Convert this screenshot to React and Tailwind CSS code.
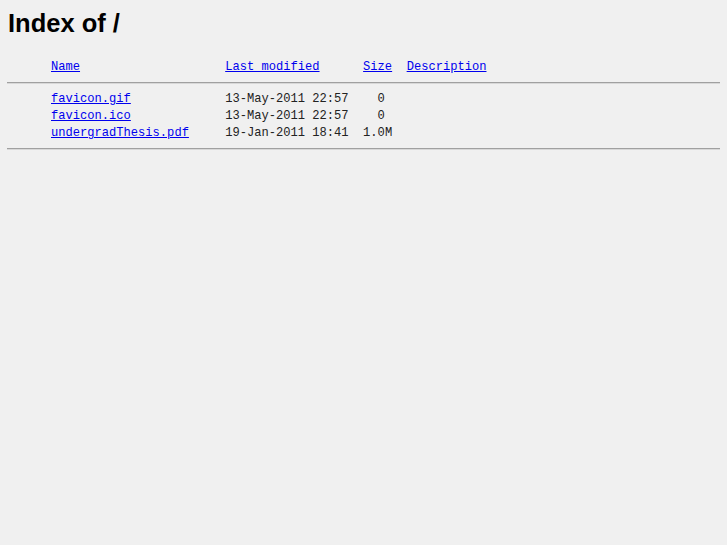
import React from 'react';

const rows = [
    { name: 'favicon.gif', date: '13-May-2011 22:57', size: '  0 ' },
    { name: 'favicon.ico', date: '13-May-2011 22:57', size: '  0 ' },
    { name: 'undergradThesis.pdf', date: '19-Jan-2011 18:41', size: '1.0M' },
];

const mono = 'font-["Liberation_Mono","Courier_New",monospace] text-[12.1px] leading-[17px] whitespace-pre';

function Rule() {
    return <div className="mx-[7px] h-[2px] border-t border-t-[#a0a0a0] border-b border-b-[#d8d8d8]" />;
}

export default function App() {
    return (
        <div className="min-h-screen bg-[#f0f0f0] text-black">
            <h1 className='px-[8px] pt-[9px] font-["Liberation_Sans",Arial,sans-serif] text-[25.5px] font-bold leading-[29px]'>
                Index of /
            </h1>
            <div className="pt-[21px]">
                {/* header line */}
                <div className={`${mono} flex pl-[51px]`}>
                    <a href="#" className="text-[#0000ee] underline">Name</a>
                    <span>{' '.repeat(20)}</span>
                    <a href="#" className="text-[#0000ee] underline">Last modified</a>
                    <span>{' '.repeat(6)}</span>
                    <a href="#" className="text-[#0000ee] underline">Size</a>
                    <span>{'  '}</span>
                    <a href="#" className="text-[#0000ee] underline">Description</a>
                </div>
                <div className="pt-[6px] pb-[7px]">
                    <Rule />
                </div>
                {rows.map(r => (
                    <div key={r.name} className={`${mono} flex pl-[51px] text-[#222]`}>
                        <a href="#" className="text-[#0000ee] underline">{r.name}</a>
                        <span>{' '.repeat(24 - r.name.length)}</span>
                        <span>{r.date}</span>
                        <span>{'  '}</span>
                        <span>{r.size}</span>
                    </div>
                ))}
                <div className="pt-[6px]">
                    <Rule />
                </div>
            </div>
        </div>
    );
}
